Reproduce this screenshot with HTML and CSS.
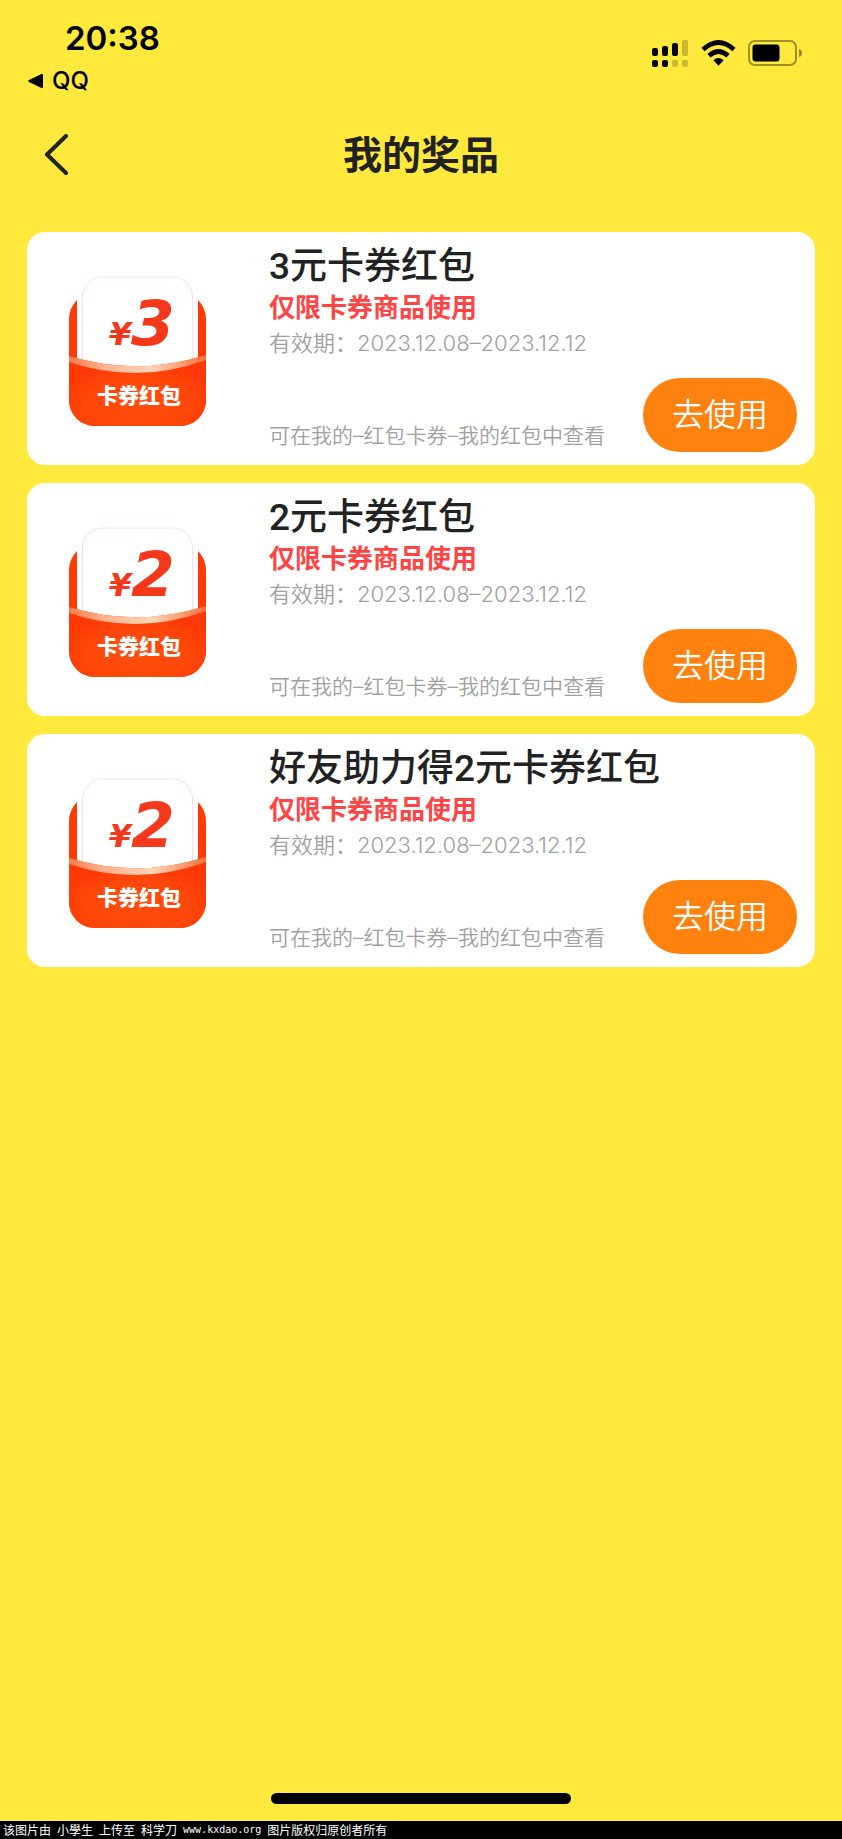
FILE: index.html
```html
<!DOCTYPE html>
<html lang="zh-CN">
<head>
<meta charset="utf-8">
<meta name="viewport" content="width=device-width, initial-scale=1">
<title>我的奖品</title>
<link rel="stylesheet" href="styles.css">
</head>
<body>
<div class="status">
  <div class="status-left">
    <time class="clock">20:38</time>
    <a class="return" href="#"><svg width="16" height="16" viewBox="0 0 16 16" aria-hidden="true"><path d="M1 7 13.500 1Q15 .5 15 2V14Q15 15.500 13.500 15L1 9Q-.5 8 1 7Z"/></svg>QQ</a>
  </div>
  <div class="status-icons">
    <svg width="38" height="28" viewBox="0 0 38 28" aria-hidden="true">
      <rect x="1" y="8" width="6" height="8" rx="2"/><rect x="11" y="6" width="6" height="10" rx="2"/><rect x="21" y="3" width="6" height="13" rx="2"/>
      <rect x="1" y="20" width="6" height="7" rx="2"/><rect x="11" y="20" width="6" height="7" rx="2"/>
      <g opacity=".2"><rect x="31" y="0" width="6" height="16" rx="2"/><rect x="21" y="20" width="6" height="7" rx="2"/><rect x="31" y="20" width="6" height="7" rx="2"/></g>
    </svg>
    <svg width="35" height="26" viewBox="0 0 35 26" aria-hidden="true">
      <path d="M2 9.500Q17.500-4.500 33 9.500M8 15.800Q17.500 7.200 27 15.800" fill="none" stroke="#000" stroke-width="4.600"/>
      <path d="M12.300 20.300Q17.500 15.800 22.700 20.300L17.500 25.800Z"/>
    </svg>
    <svg width="55" height="26" viewBox="0 0 55 26" aria-hidden="true">
      <rect x="1" y="1" width="47" height="24" rx="6" fill="none" stroke="#000" stroke-opacity=".38" stroke-width="2"/>
      <rect x="4.500" y="4.500" width="27" height="17" rx="3"/>
      <path d="M51 9Q54 10 54 13T51 17Z" opacity=".42"/>
    </svg>
  </div>
</div>
<header class="nav">
  <a class="back" href="#" aria-label="返回"><svg width="26" height="42" viewBox="0 0 26 42" aria-hidden="true"><path d="M22 2 3 20.500 22 39" fill="none" stroke="#222" stroke-width="4" stroke-linecap="round" stroke-linejoin="round"/></svg></a>
  <h1>我的奖品</h1>
</header>
<svg class="defs" width="0" height="0" aria-hidden="true">
  <defs>
    <radialGradient id="pocket" cx=".5" cy=".7" r=".6"><stop offset="0" stop-color="#ff4d0c"/><stop offset=".6" stop-color="#ff480a"/><stop offset="1" stop-color="#ff3805"/></radialGradient>
    <linearGradient id="rim"><stop offset="0" stop-color="#ff7c4c"/><stop offset=".25" stop-color="#ffb08a"/><stop offset=".6" stop-color="#ffd6b8"/><stop offset="1" stop-color="#ff7038"/></linearGradient>
    <g id="envelope">
      <rect x="0" y="17" width="137" height="133" rx="26" fill="#ff3a02"/>
      <path d="M8 10H129V100H8Z" fill="#fff"/>
      <rect x="13.500" y="1" width="110" height="110" rx="20" fill="#fff" stroke="#fcdce8"/>
      <path d="M0 80Q68.500 101 137 79V124A26 26 0 0 1 111 150H26A26 26 0 0 1 0 124Z" fill="url(#pocket)"/>
      <path d="M0 80Q68.500 101 137 79V84Q68.500 109 0 86Z" fill="url(#rim)"/>
    </g>
  </defs>
</svg>
<main class="list">
  <article class="card">
    <svg class="pic" width="138" height="151" viewBox="0 0 138 151" role="img" aria-label="3元卡券红包">
      <use href="#envelope"/><text class="yen" x="40" y="69">¥</text><text class="num" x="62" y="69">3</text><text class="cap" x="70" y="127">卡券红包</text>
    </svg>
    <div class="info">
      <h2>3元卡券红包</h2>
      <p class="limit">仅限卡券商品使用</p>
      <p class="date">有效期：2023.12.08–2023.12.12</p>
      <p class="note">可在我的–红包卡券–我的红包中查看</p>
    </div>
    <button class="use" type="button">去使用</button>
  </article>
  <article class="card">
    <svg class="pic" width="138" height="151" viewBox="0 0 138 151" role="img" aria-label="2元卡券红包">
      <use href="#envelope"/><text class="yen" x="40" y="69">¥</text><text class="num" x="62" y="69">2</text><text class="cap" x="70" y="127">卡券红包</text>
    </svg>
    <div class="info">
      <h2>2元卡券红包</h2>
      <p class="limit">仅限卡券商品使用</p>
      <p class="date">有效期：2023.12.08–2023.12.12</p>
      <p class="note">可在我的–红包卡券–我的红包中查看</p>
    </div>
    <button class="use" type="button">去使用</button>
  </article>
  <article class="card">
    <svg class="pic" width="138" height="151" viewBox="0 0 138 151" role="img" aria-label="2元卡券红包">
      <use href="#envelope"/><text class="yen" x="40" y="69">¥</text><text class="num" x="62" y="69">2</text><text class="cap" x="70" y="127">卡券红包</text>
    </svg>
    <div class="info">
      <h2>好友助力得2元卡券红包</h2>
      <p class="limit">仅限卡券商品使用</p>
      <p class="date">有效期：2023.12.08–2023.12.12</p>
      <p class="note">可在我的–红包卡券–我的红包中查看</p>
    </div>
    <button class="use" type="button">去使用</button>
  </article>
</main>
<div class="home"></div>
<footer class="credit"><span>该图片由</span><span>小學生</span><span>上传至</span><span>科学刀</span><span class="url">www.kxdao.org</span><span>图片版权归原创者所有</span></footer>
</body>
</html>
```
FILE: styles.css
```css
* { box-sizing: border-box; }
body {
  margin: 0;
  min-height: 100vh;
  display: flex;
  flex-direction: column;
  background: #ffe93d;
  color: #222;
  font-family: Inter, "Noto Sans CJK SC", sans-serif;
}
h1, h2, p { margin: 0; }
a { color: inherit; text-decoration: none; }
svg { display: block; flex: none; }
.defs { position: absolute; }

.status {
  display: flex;
  justify-content: space-between;
  padding: 18px 39px 0 28px;
  color: #000;
}
.clock {
  display: block;
  padding-left: 37px;
  font-size: 33px;
  line-height: 40px;
  font-weight: 600;
}
.return {
  display: flex;
  align-items: center;
  gap: 8px;
  margin-top: 9px;
  font-size: 24px;
  line-height: 28px;
  font-weight: 500;
}
.status-icons {
  display: flex;
  align-items: flex-start;
  gap: 12px;
  padding-top: 22px;
}

.nav {
  display: grid;
  grid-template-columns: 1fr auto 1fr;
  align-items: center;
  margin-top: 30px;
  padding: 0 44px;
}
h1 {
  font-size: 39px;
  line-height: 60px;
  font-weight: 700;
}

.list {
  display: flex;
  flex-direction: column;
  gap: 18px;
  margin-top: 47px;
  padding: 0 27px;
}
.card {
  display: flex;
  min-height: 233px;
  padding: 12px 18px 13px 42px;
  background: #fff;
  border-radius: 18px;
}
.pic { margin-top: 32px; }
.yen, .num {
  font-family: "DejaVu Sans", sans-serif;
  font-weight: 700;
  font-style: italic;
  fill: #f4381b;
}
.yen { font-size: 32px; }
.num { font-size: 63px; }
.cap {
  font-family: "Noto Sans CJK SC", sans-serif;
  font-size: 21px;
  font-weight: 900;
  text-anchor: middle;
  fill: #fff;
}
.info {
  flex: 1;
  min-width: 0;
  display: flex;
  flex-direction: column;
  margin-left: 62px;
  white-space: nowrap;
}
h2 {
  font-family: Roboto, "Noto Sans CJK SC", sans-serif;
  font-size: 37px;
  line-height: 45px;
  font-weight: 500;
}
.limit {
  font-size: 26px;
  line-height: 38px;
  font-weight: 700;
  color: #ff4444;
}
.date {
  font-size: 22px;
  line-height: 32px;
  font-weight: 350;
  color: #a0a0a0;
}
.note {
  margin-top: auto;
  font-size: 21px;
  line-height: 32px;
  font-weight: 350;
  color: #a0a0a0;
}
.use {
  align-self: flex-end;
  flex: none;
  padding: 0 29px;
  border: 0;
  border-radius: 37px;
  background: #ff820f;
  color: #fff;
  font-family: inherit;
  font-size: 32px;
  line-height: 74px;
  font-weight: 350;
}

.home {
  width: 36%;
  max-width: 300px;
  height: 11px;
  margin: auto auto 17px;
  border-radius: 6px;
  background: #000;
}
.credit {
  display: flex;
  gap: 6px;
  padding: 0 3px;
  background: #000;
  color: #fff;
  font-family: "Noto Sans CJK SC", sans-serif;
  font-size: 12px;
  line-height: 18px;
}
.url { font-family: "DejaVu Sans Mono", monospace; font-size: 10px; }
```
